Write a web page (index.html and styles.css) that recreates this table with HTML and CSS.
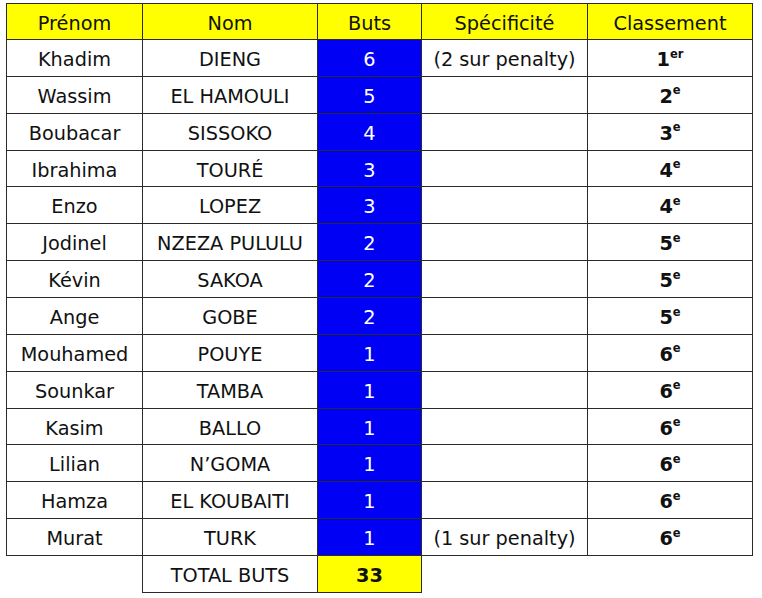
FILE: index.html
```html
<!DOCTYPE html>
<html lang="fr">
<head>
<meta charset="utf-8">
<link rel="stylesheet" href="styles.css">
</head>
<body>
<table class="scorers">
  <colgroup>
    <col class="c1"><col class="c2"><col class="c3"><col class="c4"><col class="c5">
  </colgroup>
  <thead>
    <tr class="head">
      <th>Prénom</th><th>Nom</th><th>Buts</th><th>Spécificité</th><th>Classement</th>
    </tr>
  </thead>
  <tbody>
    <tr><td>Khadim</td><td>DIENG</td><td class="goals">6</td><td>(2 sur penalty)</td><td class="rank">1<sup>er</sup></td></tr>
    <tr><td>Wassim</td><td>EL HAMOULI</td><td class="goals">5</td><td></td><td class="rank">2<sup>e</sup></td></tr>
    <tr><td>Boubacar</td><td>SISSOKO</td><td class="goals">4</td><td></td><td class="rank">3<sup>e</sup></td></tr>
    <tr><td>Ibrahima</td><td>TOURÉ</td><td class="goals">3</td><td></td><td class="rank">4<sup>e</sup></td></tr>
    <tr><td>Enzo</td><td>LOPEZ</td><td class="goals">3</td><td></td><td class="rank">4<sup>e</sup></td></tr>
    <tr><td>Jodinel</td><td>NZEZA PULULU</td><td class="goals">2</td><td></td><td class="rank">5<sup>e</sup></td></tr>
    <tr><td>Kévin</td><td>SAKOA</td><td class="goals">2</td><td></td><td class="rank">5<sup>e</sup></td></tr>
    <tr><td>Ange</td><td>GOBE</td><td class="goals">2</td><td></td><td class="rank">5<sup>e</sup></td></tr>
    <tr><td>Mouhamed</td><td>POUYE</td><td class="goals">1</td><td></td><td class="rank">6<sup>e</sup></td></tr>
    <tr><td>Sounkar</td><td>TAMBA</td><td class="goals">1</td><td></td><td class="rank">6<sup>e</sup></td></tr>
    <tr><td>Kasim</td><td>BALLO</td><td class="goals">1</td><td></td><td class="rank">6<sup>e</sup></td></tr>
    <tr><td>Lilian</td><td>N’GOMA</td><td class="goals">1</td><td></td><td class="rank">6<sup>e</sup></td></tr>
    <tr><td>Hamza</td><td>EL KOUBAITI</td><td class="goals">1</td><td></td><td class="rank">6<sup>e</sup></td></tr>
    <tr><td>Murat</td><td>TURK</td><td class="goals">1</td><td>(1 sur penalty)</td><td class="rank">6<sup>e</sup></td></tr>
    <tr class="total">
      <td class="blank"></td><td class="label">TOTAL BUTS</td><td class="sum">33</td><td class="blank"></td><td class="blank"></td>
    </tr>
  </tbody>
</table>
</body>
</html>
```

FILE: styles.css
```css
html, body {
  margin: 0;
  padding: 0;
  background: #ffffff;
}

body {
  padding: 3px 0 0 6px;
  font-family: "DejaVu Sans", Verdana, sans-serif;
  font-size: 19.3px;
  color: #111111;
}

.scorers {
  border-collapse: collapse;
  table-layout: fixed;
  width: 746px;
}

.c1 { width: 136px; }
.c2 { width: 175px; }
.c3 { width: 104px; }
.c4 { width: 166px; }
.c5 { width: 165px; }

.scorers th,
.scorers td {
  border: 1px solid #2a2a2a;
  height: 31.86px;
  padding: 4px 0 0 0;
  text-align: center;
  vertical-align: middle;
  white-space: nowrap;
  font-weight: normal;
  line-height: 20px;
}

.scorers .head th {
  background: #ffff00;
  height: 31px;
}

.scorers td.goals {
  background: #0000f5;
  color: #ffffff;
}

.scorers td.rank {
  font-weight: bold;
}

.rank sup {
  font-size: 11.5px;
  line-height: 0;
  position: relative;
  top: -1px;
}

.scorers .total td {
  height: 32px;
}

.scorers .total .blank {
  border: none;
}

.scorers .total .sum {
  background: #ffff00;
  font-weight: bold;
}
```
